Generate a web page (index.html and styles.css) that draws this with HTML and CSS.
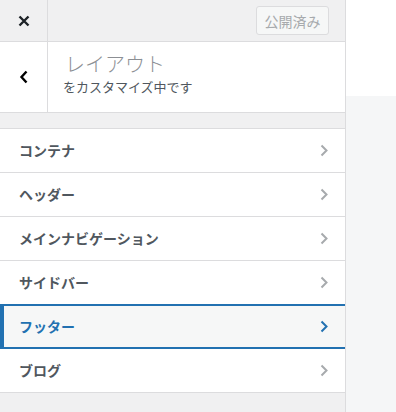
FILE: index.html
```html
<!DOCTYPE html>
<html lang="ja">
<head>
  <meta charset="UTF-8" />
  <meta name="viewport" content="width=device-width, initial-scale=1.0" />
  <title>カスタマイズ: レイアウト</title>
  <link rel="stylesheet" href="styles.css">
</head>
<body>
  <div class="layout">
    <aside class="sidebar">
      <div class="topbar">
        <a class="close" href="#">
          <svg width="12" height="12" viewBox="0 0 12 12"><path d="M1.5 1.5l9 9M10.5 1.5l-9 9" stroke="#1d2327" stroke-width="2.4" /></svg>
        </a>
        <button class="publish" disabled>公開済み</button>
      </div>

      <div class="panel-head">
        <a class="back" href="#">
          <svg width="10" height="14" viewBox="0 0 10 14"><path d="M7.5 1.5L2.5 7l5 5.5" stroke="#000" stroke-width="2.4" fill="none" /></svg>
        </a>
        <div class="panel-title">
          <h2>レイアウト</h2>
          <span>をカスタマイズ中です</span>
        </div>
      </div>

      <ul class="sections" id="sections"></ul>
    </aside>
    <div class="preview"></div>
  </div>

  <script>
    const sections = ["コンテナ", "ヘッダー", "メインナビゲーション", "サイドバー", "フッター", "ブログ"];
    const list = document.getElementById("sections");

    sections.forEach((name, i) => {
      const li = document.createElement('li');
      li.className = 'section' + (name === "フッター" ? ' active' : '');
      li.innerHTML = `
        <span>${name}</span>
        <svg width="8" height="13" viewBox="0 0 8 13"><path d="M1.5 1.5l5 5-5 5" stroke="currentColor" stroke-width="2" fill="none" /></svg>
      `;
      list.appendChild(li);
    });
  </script>
</body>
</html>
```

FILE: styles.css
```css
body { margin: 0; font-family: "Noto Sans CJK JP", "Noto Sans", sans-serif; color: #50575e; }
.layout { display: flex; height: 412px; }
.sidebar { width: 345px; border-right: 1px solid #dcdcde; background: #f0f0f1; flex-shrink: 0; }
.preview { flex: 1; background: #f5f6f7; border-top: 96px solid #fff; }

.topbar { height: 41px; display: flex; justify-content: space-between; align-items: center; border-bottom: 1px solid #dcdcde; background: #f0f0f1; }
.close { width: 47px; height: 41px; border-right: 1px solid #dcdcde; display: flex; align-items: center; justify-content: center; }
.publish { margin-right: 16px; width: 73px; height: 29px; border: 1px solid #dcdcde; border-radius: 3px; background: #f6f7f7; color: #a7aaad; font-family: inherit; font-size: 14px; padding: 0; }

.panel-head { display: flex; height: 70px; background: #fff; border-bottom: 1px solid #dcdcde; margin-bottom: 15px; }
.back { width: 47px; border-right: 1px solid #dcdcde; display: flex; align-items: center; justify-content: center; }
.panel-title { padding: 8px 0 0 15px; }
.panel-title h2 { margin: 0 0 0 2px; font-size: 20px; font-weight: 200; color: #8c8f94; line-height: 28px; }
.panel-title span { display: block; font-size: 13px; color: #50575e; line-height: 18px; }

.sections { list-style: none; margin: 0; padding: 0; border-top: 1px solid #dcdcde; }
.section { display: flex; justify-content: space-between; align-items: center; height: 43px; padding: 0 17px 0 19px; background: #fff; border-bottom: 1px solid #dcdcde; font-size: 14px; font-weight: 700; color: #50575e; }
.section span { margin-top: -2px; }
.section svg { color: #a7aaad; }
.section.active { background: #f6f7f7; color: #2271b1; border-left: 4px solid #2271b1; border-top: 2px solid #2271b1; border-bottom: 2px solid #2271b1; padding-left: 15px; height: 41px; margin-top: -1px; }
.section.active svg { color: #2271b1; }
```
